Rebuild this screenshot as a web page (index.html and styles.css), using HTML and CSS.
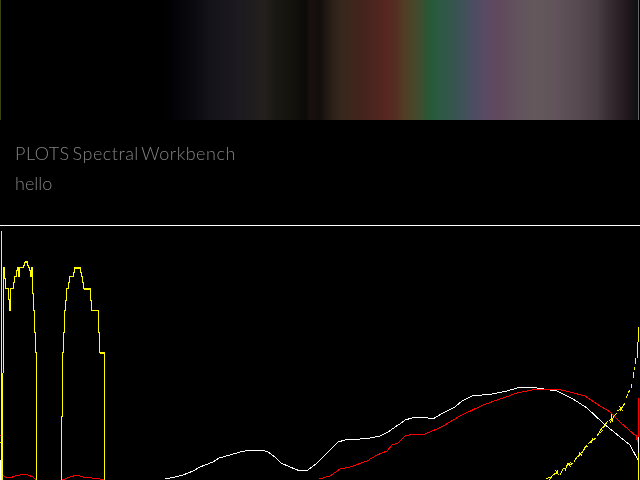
FILE: index.html
```html
<!DOCTYPE html>
<html lang="en">
<head>
<meta charset="utf-8">
<title>PLOTS Spectral Workbench</title>
<link rel="stylesheet" href="styles.css">
</head>
<body>
<main class="page">
  <div class="spectrum"></div>
  <header class="info">
    <h1 class="title">PLOTS Spectral Workbench</h1>
    <p class="subtitle">hello</p>
  </header>
  <svg class="plot" width="640" height="254" viewBox="0 226 640 254" shape-rendering="crispEdges" fill="none">
    <path class="line-yellow" d="M1.500 231V480M2.500 373V480M3.500 373V267H4.500V278H5.500V288H8.500V299H9.500V310H10.500V288H13.500V282H14.500V276H16.500V270H17.500V267H18.500V276H19.500V267H23.500V265H24.500V262H27.500V265H28.500V267H29.500V270H30.500V276H31.500V267H32.500V293H33.500V310H34.500V332H35.500V352H36.500V480"/>
    <path class="line-yellow" d="M9.500 300V310M18.500 267V276M24.500 261H27.500M3.500 267H4.500"/>
    <path class="line-yellow" d="M61.500 480V416H62.500V352H63.500V332H64.500V310H65.500V300H66.500V288H68.500V282H69.500V276H73.500V272H74.500V267H80.500V272H81.500V276H82.500V282H83.500V288H90.500V300H91.500V310H98.500V332H99.500V352H104.500V480"/>
    <path class="line-yellow" d="M74.500 268H80.500M83.500 289H90.500M99.500 353H104.500"/>
    <path class="line-red" d="M3 475 5 477 10 478 15 476 20 475 25 474 28 475 33 477 36 480M62 480 70 477 77 475 83 477 92 478 100 479 104 480"/>
    <path class="line-white" d="M165 479 175 477 183 475 193 471 200 467 213 462 219 458 230 455 240 452 250 450 262 450 268 452 275 457 281 463 290 467 300 471 308 470 317 463 323 457 338 442 345 440 360 439 370 438 380 436 388 432 398 425 400 424 405 420 412 418 423 417 433 419 443 413 455 407 462 401 472 396 492 394 507 391 517 388 525 387 537 388 557 391 573 399 587 408 603 423 620 437 630 445 638 460"/>
    <path class="line-red" d="M319 479 330 476 340 469 350 467 367 461 377 455 387 451 392 445 398 443 400 441 405 436 413 434 425 434 437 429 443 426 460 416 483 405 503 398 517 393 532 390 543 389 557 389 570 392 585 396 597 404 610 412 620 422 637 437 638 442"/>
    <path class="line-yellow" d="M546 479 550 477M549 480 553 475 556 473M556 474 558 470M555 470 559 475M560 475 563 469 566 468M565 471 568 463 571 467M566 466 571 462M570 465 573 463M574 462 577 457 580 455M579 452 582 456M578 456 583 451M582 453 585 447 588 446M584 450 587 445M588 444 592 441 596 438M591 443 593 438M597 436 602 428 605 426M600 433 603 430M604 426 608 421M609 421 614 417M610 423 612 419M611 414 613 422M613 417 617 413M617 411 622 408M619 406 623 411M620 411 623 406M622 408 625 403M626 398 628 394M628 393 630 390M631 388 632 384M633 378 633 372M634 370 634 367M635 364 636 358M637 358 637 352M637.500 352V342M638.500 342V327"/>
    <path class="line-red" d="M638.500 398V437M636.500 435V440"/>
    <path class="line-white" d="M638.500 437V453"/>
    <path class="line-yellow" d="M638.500 453V480"/>
    <path class="line-red" d="M0.500 435V436"/>
    <path class="line-yellow" d="M0.500 442V443"/>
    <path class="line-white" d="M0.500 460V480"/>
  </svg>
</main>
</body>
</html>
```

FILE: styles.css
```css
* { box-sizing: border-box; margin: 0; padding: 0; }
html, body { width: 640px; height: 480px; overflow: hidden; background: #000; }
.page { display: flex; flex-direction: column; width: 640px; height: 480px; background: #000; }
.spectrum {
  height: 120px;
  flex: none;
  background: linear-gradient(90deg,
    #3c4212 0, #3c4212 1px, #000 1px, #000 165px,
    #030308 175px, #0b0a0f 195px, #141319 210px, #1d1a20 240px, #24201d 265px,
    #1a1812 275px, #13110c 295px, #0c0a08 306px, #1a110e 310px, #120e0c 320px,
    #281d16 330px, #36271c 340px, #3f261d 353px, #45231e 363px, #562720 387px,
    #542f24 397px, #523c23 403px, #454a2d 417px, #265a36 430px, #2c5a44 440px,
    #395452 457px, #4b4d62 473px, #5d4a65 487px, #60495c 500px,
    #63545e 520px, #62585a 537px, #62545a 553px, #56494f 580px, #483e43 597px,
    #3a2f34 607px, #22171d 627px, #0f1214 637px, #0f1214 638px, #666 638px, #666 639px, #000 639px);
}
.info { flex: none; height: 105px; padding: 21px 15px 0; color: #848484; font-family: Lato, "Open Sans", sans-serif; font-weight: 300; will-change: transform; }
.title { font-size: 18px; line-height: 24px; font-weight: 300; letter-spacing: 0.5px; word-spacing: -2.5px; }
.subtitle { font-size: 18px; line-height: 24px; margin-top: 6px; }
.line-yellow { stroke: #ff0; stroke-width: 1; }
.line-red { stroke: #f00; stroke-width: 1; }
.line-white { stroke: #fff; stroke-width: 1; }
.plot { display: block; flex: none; height: 255px; border-top: 1px solid #fff; }
```
